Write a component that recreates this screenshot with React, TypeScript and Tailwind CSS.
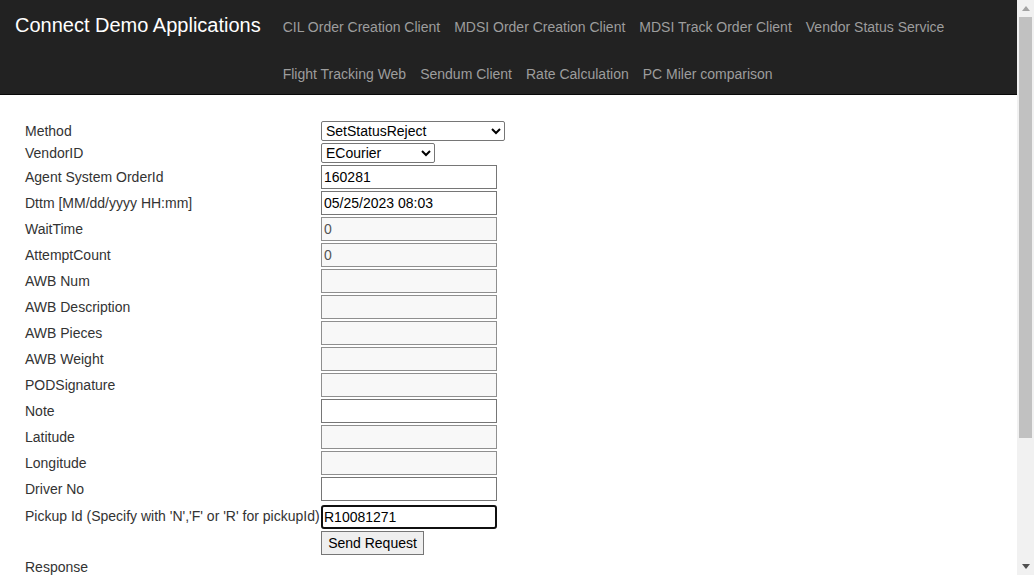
import React from "react";

const navLinks = [
  "CIL Order Creation Client",
  "MDSI Order Creation Client",
  "MDSI Track Order Client",
  "Vendor Status Service",
  "Flight Tracking Web",
  "Sendum Client",
  "Rate Calculation",
  "PC Miler comparison",
];

type Field = {
  label: string;
  value?: string;
  disabled?: boolean;
};

const fields: Field[] = [
  { label: "Agent System OrderId", value: "160281" },
  { label: "Dttm [MM/dd/yyyy HH:mm]", value: "05/25/2023 08:03" },
  { label: "WaitTime", value: "0", disabled: true },
  { label: "AttemptCount", value: "0", disabled: true },
  { label: "AWB Num", disabled: true },
  { label: "AWB Description", disabled: true },
  { label: "AWB Pieces", disabled: true },
  { label: "AWB Weight", disabled: true },
  { label: "PODSignature", disabled: true },
  { label: "Note" },
  { label: "Latitude", disabled: true },
  { label: "Longitude", disabled: true },
  { label: "Driver No" },
];

function TextBox({ value, disabled }: { value?: string; disabled?: boolean }) {
  return (
    <input
      readOnly
      value={value ?? ""}
      className={
        disabled
          ? "h-[24px] w-[176px] border border-[#8f8f8f] bg-[#f8f8f8] px-[2px] text-[14px] text-[#545454] outline-none"
          : "h-[24px] w-[176px] border border-[#767676] bg-white px-[2px] text-[14px] text-black outline-none"
      }
    />
  );
}

function Scrollbar() {
  return (
    <div className="flex w-[17px] shrink-0 flex-col bg-[#f1f1f1]">
      <div className="flex h-[17px] items-center justify-center">
        <svg width="8" height="5" viewBox="0 0 8 5">
          <polygon points="0,5 8,5 4,0" fill="#a3a3a3" />
        </svg>
      </div>
      <div className="flex-1 px-[2px]">
        <div className="h-[421px] bg-[#c1c1c1]" />
      </div>
      <div className="flex h-[17px] items-center justify-center">
        <svg width="8" height="5" viewBox="0 0 8 5">
          <polygon points="0,0 8,0 4,5" fill="#505050" />
        </svg>
      </div>
    </div>
  );
}

export default function App() {
  return (
    <div className="flex h-[575px] w-full overflow-hidden bg-white font-['Liberation_Sans',Arial,sans-serif]">
      <div className="min-w-0 flex-1">
        <header className="flex h-[95px] border-b border-[#080808] bg-[#222222]">
          <div className="shrink-0 pl-[15px] pr-[15px] pt-[15px] text-[20px] leading-5 text-white">
            Connect Demo Applications
          </div>
          <ul className="flex flex-1 flex-wrap content-start">
            {navLinks.map((link) => (
              <li key={link}>
                <a className="block h-[47px] px-[7px] pt-[17px] text-[14px] leading-5 whitespace-nowrap text-[#9d9d9d]">
                  {link}
                </a>
              </li>
            ))}
          </ul>
        </header>

        <main className="pl-[25px] pt-[26px] text-[14px] leading-5 text-[#333333]">
          <div className="grid grid-cols-[296px_auto] items-center gap-y-[2px]">
            <span>Method</span>
            <div>
              <select
                defaultValue="SetStatusReject"
                className="h-[20px] w-[184px] rounded-[2px] border border-[#767676] bg-white pl-0 text-[14px] text-black"
              >
                <option>SetStatusReject</option>
              </select>
            </div>

            <span>VendorID</span>
            <div>
              <select
                defaultValue="ECourier"
                className="h-[20px] w-[114px] rounded-[2px] border border-[#767676] bg-white pl-0 text-[14px] text-black"
              >
                <option>ECourier</option>
              </select>
            </div>

            {fields.map((field) => (
              <React.Fragment key={field.label}>
                <span>{field.label}</span>
                <div className="flex">
                  <TextBox value={field.value} disabled={field.disabled} />
                </div>
              </React.Fragment>
            ))}

            <span className="whitespace-nowrap">
              Pickup Id (Specify with 'N','F' or 'R' for pickupId)
            </span>
            <div className="flex pt-[2px]">
              <input
                readOnly
                value="R10081271"
                className="h-[24px] w-[176px] rounded-[3px] border-2 border-[#101010] bg-white px-[1px] text-[14px] text-black outline-none"
              />
            </div>

            <span />
            <div className="flex">
              <button className="h-[24px] w-[103px] border border-[#767676] bg-[#efefef] text-[14px] text-black">
                Send Request
              </button>
            </div>

            <span>Response</span>
            <span />
          </div>
        </main>
      </div>
      <Scrollbar />
    </div>
  );
}
